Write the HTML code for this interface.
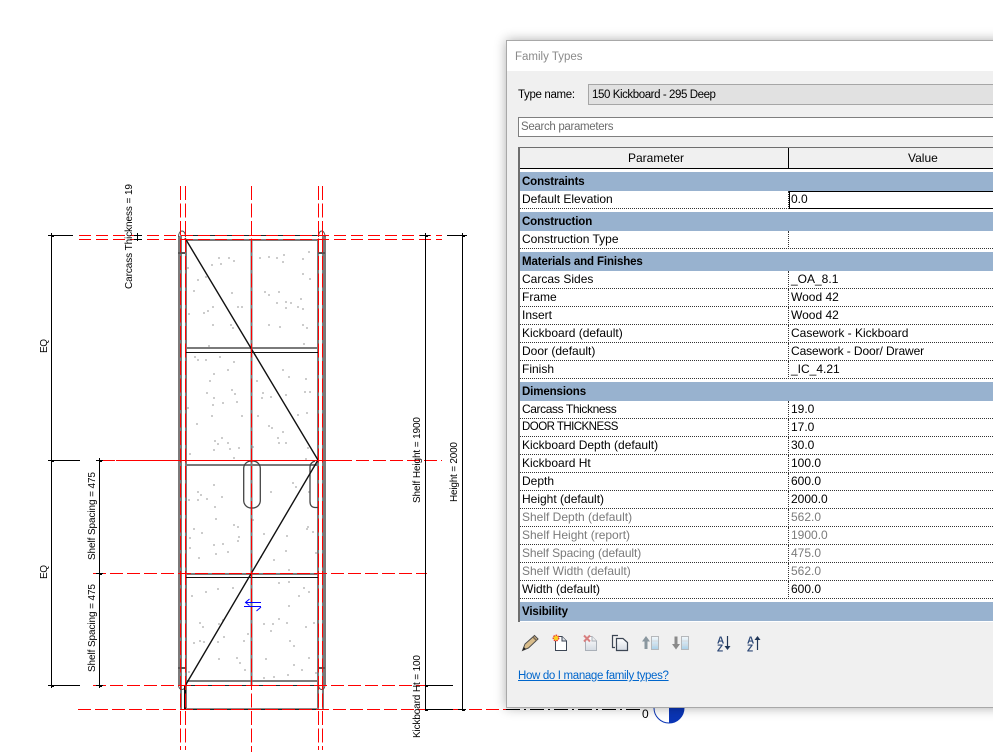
<!DOCTYPE html>
<html><head><meta charset="utf-8"><title>Family Types</title>
<style>
html,body{margin:0;padding:0;background:#fff;width:993px;height:755px;overflow:hidden}
body{position:relative;font-family:"Liberation Sans",sans-serif;font-size:12px;color:#000}
svg{position:absolute;left:0;top:0}
.dlg{position:absolute;left:506px;top:40px;width:600px;height:668px;box-sizing:border-box;border:1px solid #a8a8a8;background:#f0f0f0;box-shadow:0 0 11px rgba(0,0,0,.32)}
.tb{position:absolute;left:507px;top:41px;width:486px;height:30px;background:#fff}
.t{position:absolute;white-space:nowrap;line-height:18px;height:18px}
.tbl{position:absolute;left:518px;top:147px;width:480px;height:475px;background:#fff;border-left:2px solid #6e6e6e;border-top:2px solid #6e6e6e;box-sizing:border-box}
.sec{position:absolute;left:520px;width:473px;height:19px;background:#98b2cf;font-weight:bold;font-size:11.5px;letter-spacing:-.12px;line-height:20px;padding-left:2px;box-sizing:border-box;overflow:hidden}
.row{position:absolute;left:520px;width:473px;height:18px;border-bottom:1px dotted #333;box-sizing:border-box;line-height:16px;background:#fff}
.row b{font-weight:normal;position:absolute;left:2px;top:0;white-space:nowrap}
.row i{font-style:normal;position:absolute;left:271px;top:0;white-space:nowrap}
.row s{text-decoration:none;position:absolute;left:268px;top:0;height:18px;border-left:1px dotted #333}
.g{color:#7b7b7b}
</style></head><body>
<svg width="993" height="755" viewBox="0 0 993 755" shape-rendering="crispEdges">
<!-- speckle -->
<path fill="none" stroke="#9a9a9a" stroke-width="1" d="M187 268h2M218 258h2M228 258h2M233 261h2M220 264h2M211 265h2M205 277h2M197 280h2M193 291h2M231 293h2M212 307h2M207 311h2M203 313h2M188 314h2M237 307h2M241 307h2M212 325h2M230 325h2M232 328h2M208 346h2M259 258h2M268 257h2M276 258h2M283 255h2M302 259h2M308 252h2M282 262h2M302 274h2M309 279h2M264 292h2M268 295h2M278 292h2M276 303h2M285 302h2M290 303h2M300 299h2M285 308h2M297 307h2M302 309h2M268 325h2M279 327h2M302 325h2M306 328h2M303 344h2M194 357h2M197 360h2M205 360h2M219 357h2M233 362h2M227 370h2M213 374h2M209 381h2M256 381h2M282 370h2M288 377h2M305 379h2M206 393h2M231 390h2M234 394h2M213 398h2M236 402h2M222 403h2M212 405h2M262 393h2M270 397h2M261 398h2M285 395h2M304 392h2M309 392h2M187 408h2M211 416h2M241 416h2M257 416h2M297 415h2M306 413h2M196 424h2M268 426h2M271 428h2M282 432h2M277 438h2M221 438h2M214 441h2M217 444h2M227 443h2M278 443h2M285 443h2M307 448h2M213 450h2M229 449h2M238 448h2M189 454h2M252 447h2M233 458h2M305 459h2M213 485h2M197 492h2M200 495h2M221 497h2M206 499h2M197 500h2M188 500h2M214 507h2M215 519h2M233 525h2M237 527h2M193 529h2M201 533h2M238 537h2M237 541h2M189 538h2M222 544h2M213 545h2M227 552h2M189 548h2M215 554h2M198 558h2M270 492h2M292 483h2M295 487h2M308 492h2M307 527h2M306 529h2M312 532h2M252 520h2M263 534h2M286 536h2M273 560h2M260 557h2M285 551h2M315 553h2M288 570h2M191 596h2M205 592h2M217 589h2M232 588h2M278 583h2M288 582h2M308 592h2M298 596h2M303 588h2M288 606h2M313 623h2M263 624h2M272 624h2M278 619h2M286 623h2M305 627h2M199 623h2M202 627h2M222 620h2M218 624h2M247 634h2M270 631h2M193 643h2M199 641h2M203 642h2M217 642h2M223 637h2M243 641h2M289 641h2M293 646h2M218 659h2M236 658h2M239 663h2M265 659h2M308 658h2M293 665h2M301 670h2M188 672h2M244 670h2M263 678h2M273 677h2M287 675h2M315 673h2"/>
<!-- cabinet gray structure -->
<g fill="none" stroke="#7a7a7a" stroke-width="2">
<path d="M179 686V236M181 709V236M186 709V240M251.500 240V686M318 709V240M323 709V236M325 686V236"/>
<path d="M186 240H318M186 348H318M186 465H318M186 574H318M186 681H318"/>
</g>
<g fill="none" stroke="#8e8e8e" stroke-width="1">
<path d="M180 235.500H324M186 708.500H318"/>
</g>
<g fill="none" stroke="#555" stroke-width="1" shape-rendering="auto">
<path d="M178.500 237c0-8 7-8 7 0M318.500 237c0-8 6.500-8 6.500 0M178.500 685c0 6 7 6 7 0M318.500 685c0 6 6.500 6 6.500 0"/>
</g>
<path stroke="#555" stroke-width="2" d="M178 253h7M318 253h7M178 668h7M318 668h7" fill="none"/>
<!-- shelves black -->
<path stroke="#111" stroke-width="1" fill="none" d="M186 352.500H318M186 577.500H318"/>
<path stroke="#111" stroke-width="2" fill="none" d="M185 686V709"/>
<!-- handles -->
<g fill="none" stroke="#444" stroke-width="1.300" shape-rendering="auto">
<rect x="243.700" y="461" width="16.600" height="47" rx="7.500" ry="7.500"/>
<path d="M318 507.500h-3c-3 0-5-2-5-6V467c0-3 2-5 5-6"/>
</g>
<!-- diagonal -->
<path fill="none" stroke="#111" stroke-width="1.400" shape-rendering="auto" d="M185 238L318 460L185 686"/>
<!-- black under dashes -->
<path fill="none" stroke="#222" stroke-width="1" d="M190 235.500H318M190 709.500H318M186 685.500H318"/>
<!-- red verticals -->
<g fill="none" stroke="#f00" stroke-width="1" stroke-dasharray="14 3.500">
<path d="M180.500 186V750M185.500 186V750M251.500 186V752M318.500 186V750M322.500 186V750"/>
</g>
<!-- red horizontals -->
<g fill="none" stroke="#f00" stroke-width="1">
<path stroke-dasharray="12 5" d="M79 235.500H442M79 239.500H442"/>
<path d="M103 460.500H115M116 460.500H339" />
<path stroke-dasharray="13 4" d="M339 460.500H442"/>
<path stroke-dasharray="13 4" d="M93 573.500H427M93 685.500H427"/>
<path stroke-dasharray="13 4" d="M78 709.500H506"/>
</g>
<!-- dims -->
<g fill="none" stroke="#000" stroke-width="1">
<path d="M51.500 233V688M48 235.500H73M48 460.500H80M48 685.500H80"/>
<path d="M99.500 458V688M96 460.500H103M96 573.500H103M96 685.500H103"/>
<path d="M425.500 233V711M462.500 233V711M420 235.500H430M447 235.500H467M425 685.500H453M425 709.500H453M458 709.500H466"/>
<path d="M137.500 233V241M134 235.500H142M134 239.500H142"/>
<path stroke-dasharray="14 4 2 4" d="M506 709.500H640"/>
</g>
<g fill="#000"><rect x="51" y="235" width="3" height="2"/><rect x="51" y="460" width="3" height="2"/><rect x="51" y="685" width="3" height="2"/><rect x="99" y="460" width="3" height="2"/><rect x="99" y="573" width="3" height="2"/><rect x="99" y="685" width="3" height="2"/><rect x="425" y="235" width="3" height="2"/><rect x="462" y="235" width="3" height="2"/><rect x="425" y="685" width="3" height="2"/><rect x="425" y="709" width="3" height="2"/><rect x="462" y="709" width="3" height="2"/></g>
<!-- flip control -->
<g fill="none" stroke="#0000ff" stroke-width="1" shape-rendering="auto">
<path d="M244 606.500H261M261 602.500H246M249.500 599L245.500 602.500L249.500 605.500M261 607L256.500 611"/>
</g>
<!-- dim text -->
<g font-family="Liberation Sans,sans-serif" font-size="10" fill="#000" shape-rendering="auto">
<text transform="translate(132 289) rotate(-90)" textLength="105" lengthAdjust="spacing">Carcass Thickness = 19</text>
<text transform="translate(47 353) rotate(-90)" textLength="14" lengthAdjust="spacing">EQ</text>
<text transform="translate(47 579) rotate(-90)" textLength="14" lengthAdjust="spacing">EQ</text>
<text transform="translate(95 560) rotate(-90)" textLength="88" lengthAdjust="spacing">Shelf Spacing = 475</text>
<text transform="translate(95 672) rotate(-90)" textLength="88" lengthAdjust="spacing">Shelf Spacing = 475</text>
<text transform="translate(420 503) rotate(-90)" textLength="86" lengthAdjust="spacing">Shelf Height = 1900</text>
<text transform="translate(457 502) rotate(-90)" textLength="60" lengthAdjust="spacing">Height = 2000</text>
<text transform="translate(420 738) rotate(-90)" textLength="83" lengthAdjust="spacing">Kickboard Ht = 100</text>
<text x="642" y="718" font-size="12">0</text>
</g>
<!-- origin -->
<g shape-rendering="auto"><path d="M669 708V723A15 15 0 0 0 684 708Z" fill="#0a35b5"/><path d="M654 708A15 15 0 0 0 684 708" fill="none" stroke="#0a35b5" stroke-width="1"/></g>
</svg>

<div class="dlg"></div>
<div class="tb"></div>
<div class="t" style="left:515px;top:48px;color:#8a8a8a;font-size:11.500px">Family Types</div>
<div class="t" style="left:518px;top:86px;font-size:11.500px;letter-spacing:-.34px">Type name:</div>
<div style="position:absolute;left:588px;top:84px;width:420px;height:21px;box-sizing:border-box;background:#e1e1e1;border:1px solid #a6a6a6;line-height:21px;padding-left:3px;font-size:11.500px;letter-spacing:-.42px">150 Kickboard - 295 Deep</div>
<div style="position:absolute;left:518px;top:117px;width:490px;height:20px;box-sizing:border-box;background:#fff;border:1px solid #7f7f7f;line-height:18px;padding-left:2px;color:#6d6d6d;font-size:11.500px;letter-spacing:-.33px">Search parameters</div>

<div class="tbl"></div>
<div style="position:absolute;left:520px;top:148px;width:473px;height:21px;background:#f0f0f0;border-bottom:1px solid #000;box-sizing:border-box"></div>
<div style="position:absolute;left:788px;top:148px;width:1px;height:20px;background:#000"></div>
<div class="t" style="left:628px;top:149px">Parameter</div>
<div class="t" style="left:908px;top:149px">Value</div>

<div class="sec" style="top:172px">Constraints</div>
<div class="row" style="top:191px"><b>Default Elevation</b><s></s><i>0.0</i></div>
<div style="position:absolute;left:789px;top:191px;width:220px;height:18px;box-sizing:border-box;border:1.500px solid #000;background:#fff;line-height:15px;padding-left:1px">0.0</div>
<div class="sec" style="top:212px">Construction</div>
<div class="row" style="top:231px"><b>Construction Type</b><s></s></div>
<div class="sec" style="top:252px">Materials and Finishes</div>
<div class="row" style="top:271px"><b>Carcas Sides</b><s></s><i>_OA_8.1</i></div>
<div class="row" style="top:289px"><b>Frame</b><s></s><i>Wood 42</i></div>
<div class="row" style="top:307px"><b>Insert</b><s></s><i>Wood 42</i></div>
<div class="row" style="top:325px"><b>Kickboard (default)</b><s></s><i>Casework - Kickboard</i></div>
<div class="row" style="top:343px"><b>Door (default)</b><s></s><i style="letter-spacing:-.1px">Casework - Door/ Drawer</i></div>
<div class="row" style="top:361px"><b>Finish</b><s></s><i>_IC_4.21</i></div>
<div class="sec" style="top:382px">Dimensions</div>
<div class="row" style="top:401px"><b style="letter-spacing:-.4px">Carcass Thickness</b><s></s><i>19.0</i></div>
<div class="row" style="top:419px"><b style="font-size:11.500px;letter-spacing:-.53px;line-height:17px">DOOR THICKNESS</b><s></s><i>17.0</i></div>
<div class="row" style="top:437px"><b>Kickboard Depth (default)</b><s></s><i>30.0</i></div>
<div class="row" style="top:455px"><b>Kickboard Ht</b><s></s><i>100.0</i></div>
<div class="row" style="top:473px"><b>Depth</b><s></s><i>600.0</i></div>
<div class="row" style="top:491px"><b>Height (default)</b><s></s><i>2000.0</i></div>
<div class="row g" style="top:509px"><b>Shelf Depth (default)</b><s></s><i>562.0</i></div>
<div class="row g" style="top:527px"><b>Shelf Height (report)</b><s></s><i>1900.0</i></div>
<div class="row g" style="top:545px"><b style="letter-spacing:-.1px">Shelf Spacing (default)</b><s></s><i>475.0</i></div>
<div class="row g" style="top:563px"><b>Shelf Width (default)</b><s></s><i>562.0</i></div>
<div class="row" style="top:581px"><b>Width (default)</b><s></s><i>600.0</i></div>
<div class="sec" style="top:602px">Visibility</div>

<svg width="993" height="755" viewBox="0 0 993 755" style="pointer-events:none">
<!-- pencil -->
<path d="M522.500 650.500L525 644L534.500 635.500L538 639L528.500 648Z" fill="#d9bd8b" stroke="#4a4a4a" stroke-width="1"/>
<path d="M533 637l3.500 3.500" stroke="#7a6a55" stroke-width="1.500"/>
<path d="M522.500 650.500L523.800 647L526 649Z" fill="#222"/>
<!-- new -->
<path d="M555.500 641V650.500H566.500V641L562 636.500H558" fill="#fff" stroke="#3c4654" stroke-width="1"/>
<path d="M562 636.500V641H566.500" fill="#dfe3e8" stroke="#3c4654" stroke-width="1"/>
<circle cx="556" cy="638" r="2.800" fill="#f7d020" stroke="#e33" stroke-width="1.300" stroke-dasharray="1.500 1"/>
<!-- delete -->
<path d="M585.500 641V650.500H596.500V641L592 636.500H589" fill="url(#gd)" stroke="#aab0b8" stroke-width="1"/>
<path d="M592 636.500V641H596.500" fill="#eee" stroke="#aab0b8" stroke-width="1"/>
<path d="M584 635.500L590 641.500M590 635.500L584 641.500" stroke="#d88080" stroke-width="2"/>
<defs><linearGradient id="gd" x1="0" y1="0" x2="0" y2="1"><stop offset="0" stop-color="#fff"/><stop offset="1" stop-color="#d4dae2"/></linearGradient>
<linearGradient id="gb" x1="0" y1="0" x2="0" y2="1"><stop offset="0" stop-color="#f4f8fb"/><stop offset="1" stop-color="#a9cfe8"/></linearGradient></defs>
<!-- copy -->
<path d="M618 635.500H612.500V647.500H615" fill="none" stroke="#3c4654" stroke-width="1.200"/>
<path d="M616.500 638.500H623L627.500 642.500V650.500H616.500Z" fill="url(#gd)" stroke="#3c4654" stroke-width="1.200"/>
<!-- up -->
<path d="M642 641.500L646 636L650 641.500H647.500V649H644.500V641.500Z" fill="#8a979f"/>
<rect x="651.500" y="636.500" width="7" height="13" fill="url(#gb)" stroke="#b5b8bb"/>
<path d="M652 641h6M652 645h6" stroke="#d5dadf"/>
<!-- down -->
<path d="M672 644L676 649.500L680 644H677.500V636.500H674.500V644Z" fill="#8a8a8a"/>
<rect x="681.500" y="636.500" width="7" height="13" fill="url(#gb)" stroke="#b5b8bb"/>
<path d="M682 641h6M682 645h6" stroke="#d5dadf"/>
<!-- AZ -->
<g font-family="Liberation Sans,sans-serif" font-size="10" font-weight="bold" fill="#2f4a78">
<text x="717" y="643.500">A</text><text x="717" y="651.500">Z</text>
<text x="747" y="643.500">A</text><text x="747" y="651.500">Z</text>
</g>
<path d="M727.500 636V648" stroke="#1f3556" stroke-width="1.200"/><path d="M724.500 646H730.500L727.500 650Z" fill="#1f3556"/>
<path d="M757.500 638V650" stroke="#1f3556" stroke-width="1.200"/><path d="M754.500 640H760.500L757.500 636Z" fill="#1f3556"/>
</svg>
<div class="t" style="left:518px;top:667px;color:#0066cc;text-decoration:underline;font-size:11.500px;letter-spacing:-.34px">How do I manage family types?</div>
</body></html>
